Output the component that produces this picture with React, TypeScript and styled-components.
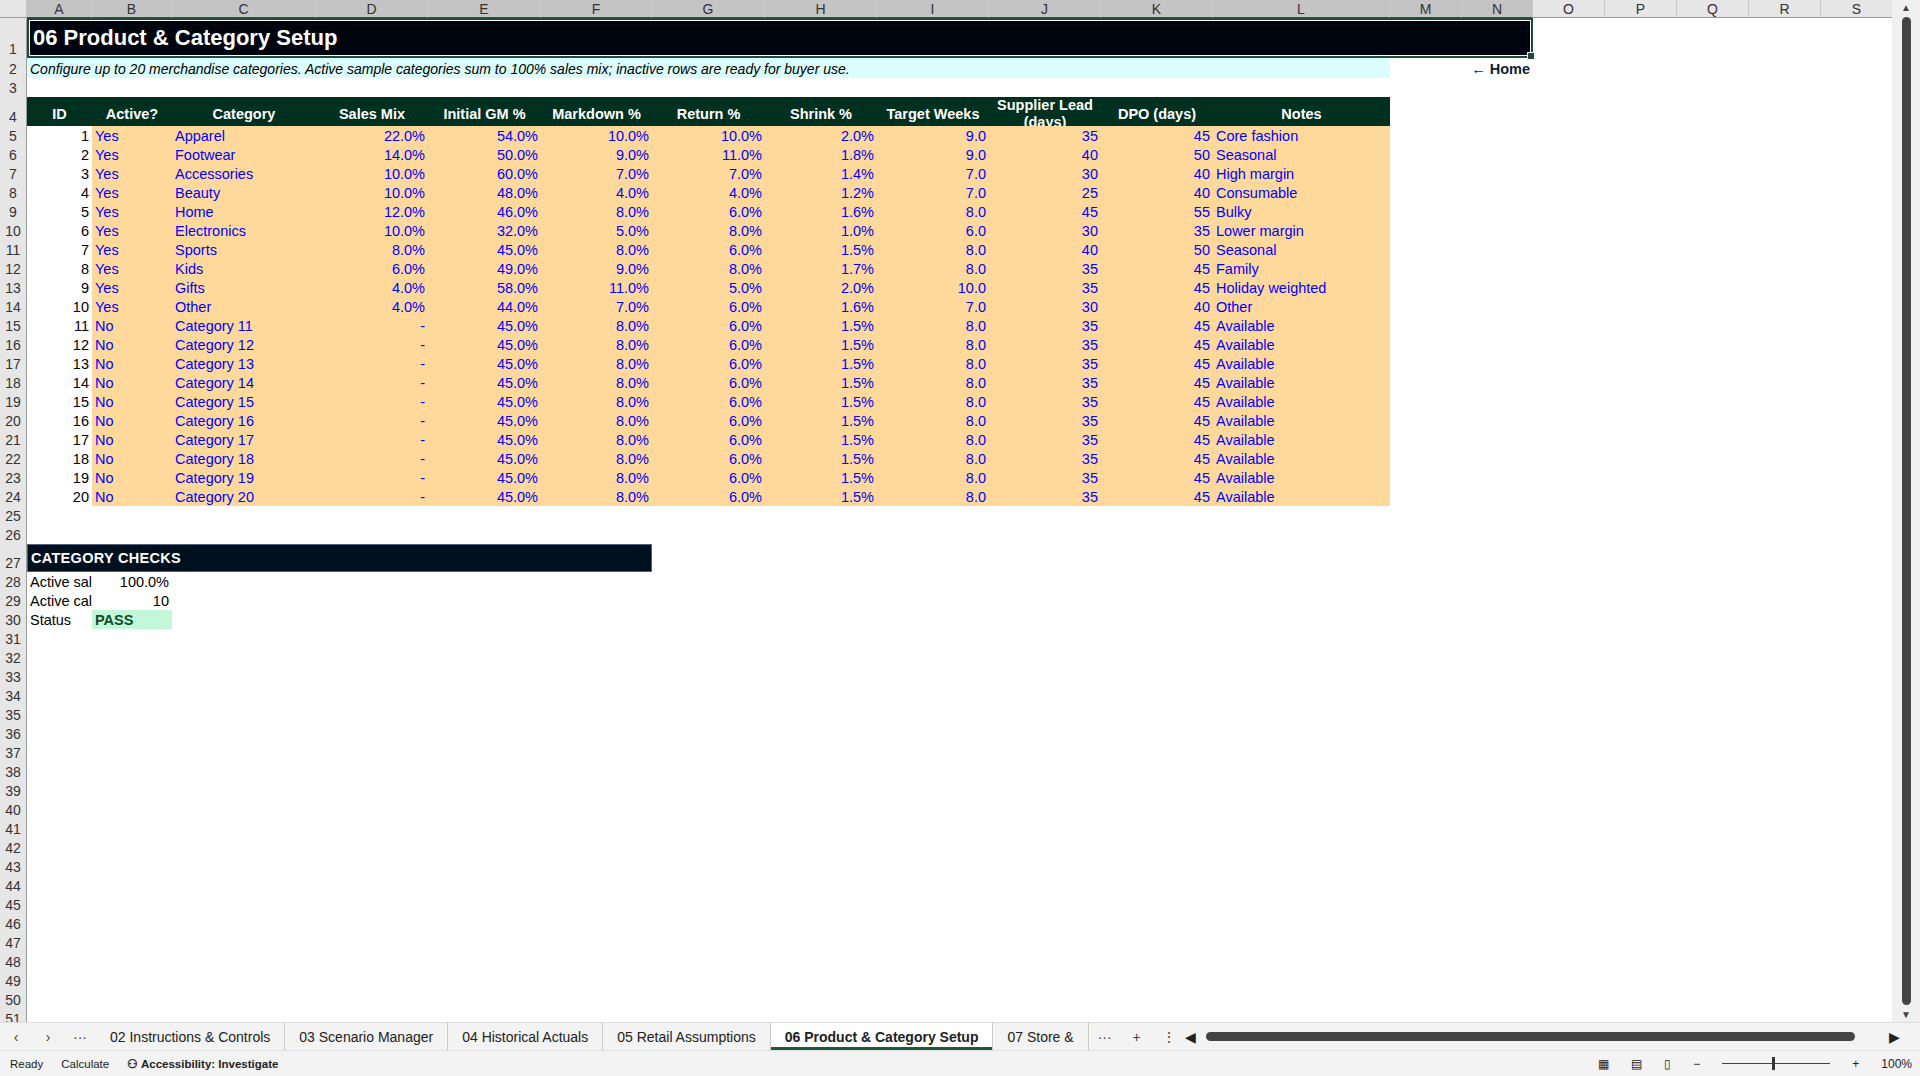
import styled, { createGlobalStyle } from "styled-components";

const GlobalStyle = createGlobalStyle`
  html, body { margin: 0; padding: 0; background: #fff; overflow: hidden; }
  body { font-family: "Liberation Sans", Arial, sans-serif; }
`;

const COLS = "27px 65px 80px 144px 112px 113px 111px 113px 112px 112px 112px 112px 177px 72px 71px 72px 72px 72px 72px 72px";
const LETTERS = ["A","B","C","D","E","F","G","H","I","J","K","L","M","N","O","P","Q","R","S"];

const Page = styled.div`
  width: 1920px;
  height: 1076px;
  display: flex;
  flex-direction: column;
  background: #fff;
`;

const Main = styled.div`
  flex: 1;
  display: flex;
  overflow: hidden;
`;

const Sheet = styled.div`
  flex: 1;
  overflow: hidden;
`;

const Row = styled.div<{ $h: number }>`
  display: grid;
  grid-template-columns: ${COLS};
  height: ${(p) => p.$h}px;
`;

const ColHead = styled.div<{ $sel?: boolean }>`
  background: ${(p) => (p.$sel ? "#c4c4c4" : "#e6e6e6")};
  border-right: 1px solid #c8c8c8;
  border-bottom: 1px solid ${(p) => (p.$sel ? "#1e5d37" : "#9c9c9c")};
  color: #333;
  font-size: 14px;
  display: flex;
  align-items: center;
  justify-content: center;
`;

const RowNum = styled.div`
  background: #e6e6e6;
  border-right: 1px solid #9c9c9c;
  color: #333;
  font-size: 14px;
  display: flex;
  align-items: flex-end;
  justify-content: center;
  padding-bottom: 1px;
  box-sizing: border-box;
`;

const Cell = styled.div<{ $span?: number; $bg?: string; $align?: string; $color?: string; $bold?: boolean; $size?: number; $italic?: boolean }>`
  grid-column: span ${(p) => p.$span || 1};
  background: ${(p) => p.$bg || "transparent"};
  color: ${(p) => p.$color || "#000"};
  font-weight: ${(p) => (p.$bold ? 700 : 400)};
  font-style: ${(p) => (p.$italic ? "italic" : "normal")};
  font-size: ${(p) => p.$size || 14.5}px;
  display: flex;
  align-items: flex-end;
  justify-content: ${(p) => p.$align || "flex-start"};
  padding: 0 3px 1px;
  white-space: nowrap;
  overflow: hidden;
  box-sizing: border-box;
`;

const TitleCell = styled.div`
  grid-column: span 14;
  background: #00040f;
  border: 2px solid #1e4d33;
  outline: 1px solid #fff;
  outline-offset: -3px;
  color: #fff;
  font-size: 22px;
  font-weight: 700;
  display: flex;
  align-items: center;
  padding-left: 4px;
  box-sizing: border-box;
  position: relative;
`;

const Handle = styled.span`
  position: absolute;
  right: -4px;
  bottom: -4px;
  width: 6px;
  height: 6px;
  background: #1e4d33;
  border: 1px solid #fff;
`;

const HeadCell = styled.div<{ $clip?: boolean }>`
  background: #003020;
  color: #fff;
  font-size: 14.5px;
  font-weight: 700;
  display: flex;
  align-items: ${(p) => (p.$clip ? "flex-start" : "center")};
  justify-content: center;
  text-align: center;
  padding-top: ${(p) => (p.$clip ? "0" : "5px")};
  line-height: 17px;
  overflow: hidden;
  box-sizing: border-box;
`;

const ChecksBar = styled.div`
  grid-column: span 6;
  background: #00101f;
  border: 1px solid #50607a;
  color: #fff;
  font-size: 14.5px;
  font-weight: 700;
  display: flex;
  align-items: center;
  padding-left: 3px;
  letter-spacing: 0.3px;
`;

const Scroll = styled.div`
  width: 28px;
  background: #f0f0f0;
  display: flex;
  flex-direction: column;
  align-items: center;
  justify-content: space-between;
  font-size: 10px;
  color: #444;
  padding: 2px 0;
  box-sizing: border-box;
`;

const ScrollThumb = styled.div`
  flex: 1;
  width: 9px;
  background: #444;
  border-radius: 5px;
  margin: 4px 0;
`;

const TabBar = styled.div`
  height: 27px;
  background: #f3f3f3;
  border-top: 1px solid #ddd;
  display: flex;
  align-items: center;
  font-size: 14px;
  color: #222;
`;

const Nav = styled.span`
  width: 32px;
  text-align: center;
  color: #444;
`;

const Tab = styled.div<{ $active?: boolean }>`
  height: 100%;
  padding: 0 14px;
  display: flex;
  align-items: center;
  border-right: 1px solid #ccc;
  background: ${(p) => (p.$active ? "#fff" : "transparent")};
  font-weight: ${(p) => (p.$active ? 700 : 400)};
  box-shadow: ${(p) => (p.$active ? "inset 0 -3px 0 #1e5d37" : "none")};
`;

const HScroll = styled.div`
  flex: 1;
  height: 9px;
  background: #444;
  border-radius: 5px;
  margin: 0 34px 0 10px;
`;

const Status = styled.div`
  height: 25px;
  background: #f3f3f3;
  border-top: 1px solid #e0e0e0;
  display: flex;
  align-items: center;
  font-size: 11.5px;
  color: #222;
  padding-left: 10px;
  gap: 18px;
`;

const Spacer = styled.div`
  flex: 1;
`;

const ViewIcons = styled.div`
  display: flex;
  align-items: center;
  gap: 22px;
  padding-right: 8px;
  font-size: 12px;
`;

const Slider = styled.div`
  width: 108px;
  height: 1px;
  background: #444;
  position: relative;
  & > span {
    position: absolute;
    left: 50px;
    top: -6px;
    width: 3px;
    height: 13px;
    background: #333;
  }
`;

const PEACH = "#ffd99b";
const BLUE = "#0000ff";

const active = [
  [1, "Apparel", "22.0%", "54.0%", "10.0%", "10.0%", "2.0%", "9.0", "35", "45", "Core fashion"],
  [2, "Footwear", "14.0%", "50.0%", "9.0%", "11.0%", "1.8%", "9.0", "40", "50", "Seasonal"],
  [3, "Accessories", "10.0%", "60.0%", "7.0%", "7.0%", "1.4%", "7.0", "30", "40", "High margin"],
  [4, "Beauty", "10.0%", "48.0%", "4.0%", "4.0%", "1.2%", "7.0", "25", "40", "Consumable"],
  [5, "Home", "12.0%", "46.0%", "8.0%", "6.0%", "1.6%", "8.0", "45", "55", "Bulky"],
  [6, "Electronics", "10.0%", "32.0%", "5.0%", "8.0%", "1.0%", "6.0", "30", "35", "Lower margin"],
  [7, "Sports", "8.0%", "45.0%", "8.0%", "6.0%", "1.5%", "8.0", "40", "50", "Seasonal"],
  [8, "Kids", "6.0%", "49.0%", "9.0%", "8.0%", "1.7%", "8.0", "35", "45", "Family"],
  [9, "Gifts", "4.0%", "58.0%", "11.0%", "5.0%", "2.0%", "10.0", "35", "45", "Holiday weighted"],
  [10, "Other", "4.0%", "44.0%", "7.0%", "6.0%", "1.6%", "7.0", "30", "40", "Other"],
];
const data = [
  ...active.map((r) => ({ id: r[0], act: "Yes", cells: r.slice(1) as string[] })),
  ...Array.from({ length: 10 }, (_, i) => ({
    id: i + 11,
    act: "No",
    cells: [`Category ${i + 11}`, "-", "45.0%", "8.0%", "6.0%", "1.5%", "8.0", "35", "45", "Available"],
  })),
];

const headers = ["ID", "Active?", "Category", "Sales Mix", "Initial GM %", "Markdown %", "Return %", "Shrink %", "Target Weeks", "Supplier Lead (days)", "DPO (days)", "Notes"];

export default function App() {
  const blank = (n: number) =>
    Array.from({ length: n }, (_, i) => <Cell key={"b" + i} />);
  const rows: JSX.Element[] = [];

  rows.push(
    <Row $h={40} key="r1">
      <RowNum>1</RowNum>
      <TitleCell>06 Product &amp; Category Setup<Handle /></TitleCell>
      {blank(5)}
    </Row>
  );
  rows.push(
    <Row $h={20} key="r2">
      <RowNum>2</RowNum>
      <Cell $span={12} $bg="#dbfdfd" $italic $size={14}>
        Configure up to 20 merchandise categories. Active sample categories sum to 100% sales mix; inactive rows are ready for buyer use.
      </Cell>
      <Cell $span={2} $align="flex-end" $bold $color="#0b1f33">← Home</Cell>
      {blank(5)}
    </Row>
  );
  rows.push(
    <Row $h={19} key="r3"><RowNum>3</RowNum>{blank(19)}</Row>
  );
  rows.push(
    <Row $h={29} key="r4">
      <RowNum>4</RowNum>
      {headers.map((h, i) => (
        <HeadCell key={h} $clip={i === 9}>{h}</HeadCell>
      ))}
      {blank(7)}
    </Row>
  );
  data.forEach((d, i) => {
    const c = d.cells;
    rows.push(
      <Row $h={19} key={"d" + i}>
        <RowNum>{i + 5}</RowNum>
        <Cell $align="flex-end">{d.id}</Cell>
        <Cell $bg={PEACH} $color={BLUE}>{d.act}</Cell>
        <Cell $bg={PEACH} $color={BLUE}>{c[0]}</Cell>
        {c.slice(1, 9).map((v, j) => (
          <Cell key={j} $bg={PEACH} $color={BLUE} $align="flex-end">{v}</Cell>
        ))}
        <Cell $bg={PEACH} $color={BLUE}>{c[9]}</Cell>
        {blank(7)}
      </Row>
    );
  });
  rows.push(<Row $h={19} key="r25"><RowNum>25</RowNum>{blank(19)}</Row>);
  rows.push(<Row $h={19} key="r26"><RowNum>26</RowNum>{blank(19)}</Row>);
  rows.push(
    <Row $h={28} key="r27">
      <RowNum>27</RowNum>
      <ChecksBar>CATEGORY CHECKS</ChecksBar>
      {blank(13)}
    </Row>
  );
  rows.push(
    <Row $h={19} key="r28">
      <RowNum>28</RowNum>
      <Cell>Active sal</Cell>
      <Cell $align="flex-end">100.0%</Cell>
      {blank(17)}
    </Row>
  );
  rows.push(
    <Row $h={19} key="r29">
      <RowNum>29</RowNum>
      <Cell>Active cal</Cell>
      <Cell $align="flex-end">10</Cell>
      {blank(17)}
    </Row>
  );
  rows.push(
    <Row $h={19} key="r30">
      <RowNum>30</RowNum>
      <Cell>Status</Cell>
      <Cell $bg="#c3f7da" $color="#0b4d2b" $bold>PASS</Cell>
      {blank(17)}
    </Row>
  );
  for (let r = 31; r <= 51; r++) {
    rows.push(<Row $h={19} key={"e" + r}><RowNum>{r}</RowNum>{blank(19)}</Row>);
  }

  return (
    <Page>
      <GlobalStyle />
      <Main>
        <Sheet>
          <Row $h={18}>
            <ColHead />
            {LETTERS.map((l, i) => (
              <ColHead key={l} $sel={i < 14}>{l}</ColHead>
            ))}
          </Row>
          {rows}
        </Sheet>
        <Scroll>
          <span>▲</span>
          <ScrollThumb />
          <span>▼</span>
        </Scroll>
      </Main>
      <TabBar>
        <Nav>‹</Nav>
        <Nav>›</Nav>
        <Nav>···</Nav>
        <Tab>02 Instructions &amp; Controls</Tab>
        <Tab>03 Scenario Manager</Tab>
        <Tab>04 Historical Actuals</Tab>
        <Tab>05 Retail Assumptions</Tab>
        <Tab $active>06 Product &amp; Category Setup</Tab>
        <Tab>07 Store &amp;</Tab>
        <Nav>···</Nav>
        <Nav>+</Nav>
        <Nav>⋮</Nav>
        <span>◀</span>
        <HScroll />
        <span style={{ marginRight: 20 }}>▶</span>
      </TabBar>
      <Status>
        <span>Ready</span>
        <span>Calculate</span>
        <span style={{ fontWeight: 700 }}>⚇ Accessibility: Investigate</span>
        <Spacer />
        <ViewIcons>
          <span>▦</span>
          <span>▤</span>
          <span>▯</span>
          <span>−</span>
          <Slider><span /></Slider>
          <span>+</span>
          <span>100%</span>
        </ViewIcons>
      </Status>
    </Page>
  );
}
